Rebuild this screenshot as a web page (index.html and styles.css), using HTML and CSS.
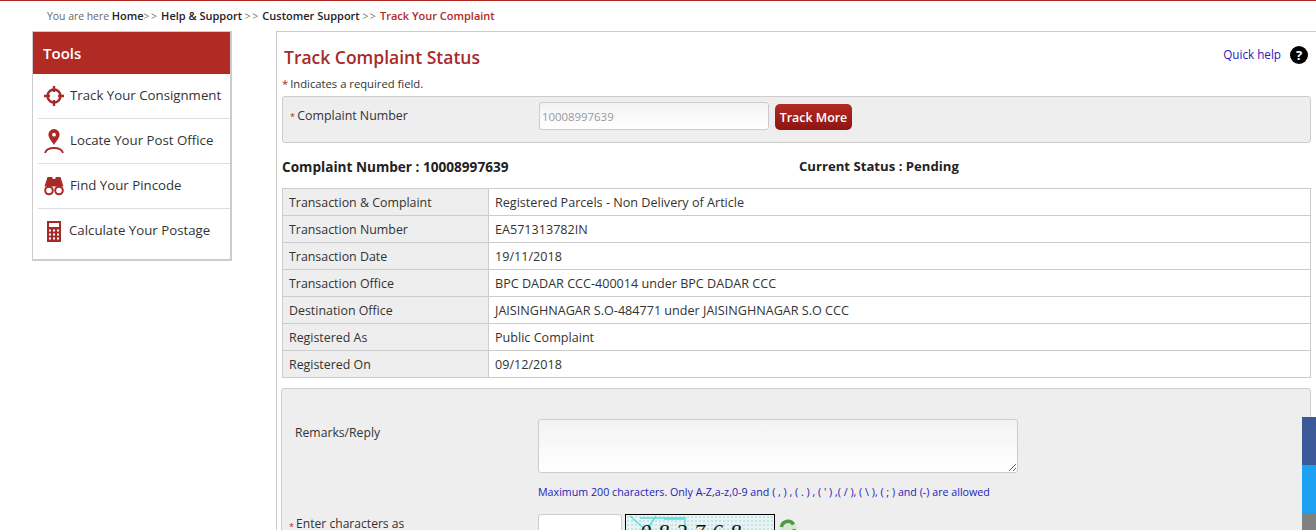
FILE: index.html
```html
<!DOCTYPE html>
<html lang="en">
  <head>
    <meta charset="UTF-8" />
    <title>Track Your Complaint</title>
    <link rel="stylesheet" href="styles.css">
  </head>
  <body>
    <div class="breadcrumb">
      You are here <b>Home</b><span class="sep">&gt;&gt;</span> <b>Help &amp; Support</b> <span class="sep">&gt;&gt;</span> <b>Customer Support</b> <span class="sep">&gt;&gt;</span> <b class="current">Track Your Complaint</b>
    </div>

    <div class="layout">
      <div class="tools">
        <div class="tools-title">Tools</div>
        <ul class="tools-list">
          <li>
            <svg class="tool-icon" viewBox="0 0 20 20" width="20" height="20">
              <circle cx="10" cy="10" r="6.5" fill="none" stroke="#a82a28" stroke-width="2.4" />
              <path d="M10 0v6M10 14v6M0 10h6M14 10h6" stroke="#a82a28" stroke-width="2.4" />
            </svg>
            <span class="tool-name">Track Your Consignment</span>
          </li>
          <li>
            <svg class="tool-icon" viewBox="0 0 20 25" width="20" height="25">
              <path fill-rule="evenodd" fill="#a82a28" d="M10 0a5.6 5.6 0 0 1 5.6 5.6c0 3.4-3.4 7-5.6 10.4C7.800 12.600 4.400 9 4.400 5.600A5.600 5.600 0 0 1 10 0zm0 3.800a1.900 1.900 0 1 0 0 3.800 1.900 1.900 0 0 0 0-3.800z" />
              <path d="M1 24c1-3.500 4.500-5 9-5s8 1.500 9 5" fill="none" stroke="#a82a28" stroke-width="1.800" />
            </svg>
            <span class="tool-name">Locate Your Post Office</span>
          </li>
          <li>
            <svg class="tool-icon" viewBox="0 0 20 20" width="20" height="20">
              <path fill="#a82a28" d="M3.500 1h4.500l1 2h2l1-2h4.500l3 9.500H0.500z" />
              <circle cx="5" cy="14.500" r="3.800" fill="#fff" stroke="#a82a28" stroke-width="2" />
              <circle cx="15" cy="14.500" r="3.800" fill="#fff" stroke="#a82a28" stroke-width="2" />
            </svg>
            <span class="tool-name">Find Your Pincode</span>
          </li>
          <li class="calc">
            <svg class="tool-icon" viewBox="0 0 14 21" width="14" height="21">
              <path fill-rule="evenodd" fill="#a82a28" d="M0 0h14v21H0zM2 2v4h10V2zM2 8.500v2h2v-2zm4 0v2h2v-2zm4 0v2h2v-2zM2 12.500v2h2v-2zm4 0v2h2v-2zm4 0v2h2v-2zM2 16.500v2h2v-2zm4 0v2h2v-2zm4 0v2h2v-2z" />
            </svg>
            <span class="tool-name">Calculate Your Postage</span>
          </li>
        </ul>
      </div>

      <div class="main">
        <div class="main-head">
          <h1>Track Complaint Status</h1>
          <div class="quick-help">
            <a>Quick help</a>
            <span class="help-icon">?</span>
          </div>
        </div>
        <p class="required-note"><span class="star">*</span> Indicates a required field.</p>

        <div class="panel search-panel">
          <label class="field-label"><span class="star">*</span> Complaint Number</label>
          <input class="text-input" type="text" value="10008997639" readonly />
          <button class="track-btn">Track More</button>
        </div>

        <div class="summary">
          <div class="summary-number">Complaint Number : 10008997639</div>
          <div class="summary-status">Current Status : Pending</div>
        </div>

        <table class="details">
          <tr><td>Transaction &amp; Complaint</td><td>Registered Parcels - Non Delivery of Article</td></tr>
          <tr><td>Transaction Number</td><td>EA571313782IN</td></tr>
          <tr><td>Transaction Date</td><td>19/11/2018</td></tr>
          <tr><td>Transaction Office</td><td>BPC DADAR CCC-400014 under BPC DADAR CCC</td></tr>
          <tr><td>Destination Office</td><td>JAISINGHNAGAR S.O-484771 under JAISINGHNAGAR S.O CCC</td></tr>
          <tr><td>Registered As</td><td>Public Complaint</td></tr>
          <tr><td>Registered On</td><td>09/12/2018</td></tr>
        </table>

        <div class="panel reply-panel">
          <div class="reply-row">
            <label class="field-label reply-label">Remarks/Reply</label>
            <div>
              <textarea class="remarks"></textarea>
              <p class="hint">Maximum 200 characters. Only A-Z,a-z,0-9 and ( , ) , ( . ) , ( ' ) ,( / ), ( \ ), ( ; ) and (-) are allowed</p>
            </div>
          </div>
          <div class="captcha-row">
            <label class="field-label captcha-label"><span class="star">*</span> Enter characters as</label>
            <input class="captcha-input" type="text" />
            <div class="captcha-img">
              <svg class="captcha-noise" viewBox="0 0 150 24" width="150" height="24">
                <path d="M4 1l18 16M14 3h45v14M30 1l-8 12M38 4h20" fill="none" stroke="#5fdcdc" stroke-width="1.500" />
              </svg>
              <span class="captcha-text">082768</span>
            </div>
            <svg class="refresh" viewBox="0 0 18 18" width="18" height="18">
              <circle cx="9" cy="9" r="8.500" fill="#d5e8d0" />
              <path d="M2.500 8a6.500 6.500 0 0 1 12-2.500M15.500 10a6.500 6.500 0 0 1-12 2.500" fill="none" stroke="#4f9a45" stroke-width="3.500" />
            </svg>
          </div>
        </div>
      </div>
    </div>

    <div class="social">
      <div class="social-fb"></div>
      <div class="social-tw"></div>
      <div class="social-more"></div>
    </div>
  </body>
</html>
```

FILE: styles.css
```css
html,
body {
  height: 530px;
  overflow: hidden;
}

body {
  margin: 0;
  font-family: "Open Sans", "Noto Sans", sans-serif;
  font-size: 12px;
  color: #333;
  background-color: #fff;
  border-top: 1px solid #b02a25;
  box-sizing: border-box;
}

.breadcrumb {
  height: 30px;
  padding: 8px 0 0 47px;
  box-sizing: border-box;
  font-size: 10.4px;
  line-height: 14px;
  color: #666;
  white-space: nowrap;
}

.breadcrumb b {
  color: #222;
  font-size: 11px;
  font-weight: 600;
}

.breadcrumb .current {
  color: #b02a25;
}

.sep {
  color: #777;
  letter-spacing: 1.5px;
}

.layout {
  display: flex;
  align-items: flex-start;
  padding-left: 32px;
}

.tools {
  width: 200px;
  height: 230px;
  box-sizing: border-box;
  flex-shrink: 0;
  border: 1px solid #ccc;
  border-width: 1px 2px 2px 1px;
}

.tools-title {
  height: 42px;
  padding-left: 10px;
  background-color: #b22a24;
  color: #fff;
  font-size: 15px;
  font-weight: 600;
  line-height: 42px;
}

.tools-list {
  list-style: none;
  margin: 0;
  padding: 0 0 0 5px;
}

.tools-list li {
  display: flex;
  align-items: center;
  gap: 6px;
  height: 45px;
  padding-left: 6px;
  box-sizing: border-box;
  border-bottom: 1px solid #ddd;
  font-size: 13.25px;
  white-space: nowrap;
}

.tool-name {
  margin-top: -2px;
}

.tools-list li.calc {
  border-bottom: none;
  gap: 8px;
  padding-left: 9px;
}

.tools-list li.calc .tool-name {
  margin-top: -4px;
}

.tool-icon {
  flex-shrink: 0;
}

.main {
  width: 1040px;
  height: 600px;
  flex-shrink: 0;
  margin-left: 44px;
  padding: 0 0 0 5px;
  box-sizing: border-box;
  border-top: 1px solid #ccc;
  border-left: 1px solid #ccc;
}

.main-head {
  display: flex;
  justify-content: space-between;
  height: 44px;
}

h1 {
  margin: 13px 0 0 2px;
  font-size: 17.500px;
  font-weight: 600;
  line-height: 24px;
  color: #a82a28;
}

.quick-help {
  display: flex;
  align-items: center;
  gap: 9px;
  height: 18px;
  margin: 14px 0 0 0;
  padding-right: 8px;
}

.quick-help a {
  color: #2222bb;
  font-size: 11.7px;
  margin-top: -2px;
}

.help-icon {
  width: 18px;
  height: 18px;
  border-radius: 50%;
  background-color: #000;
  color: #fff;
  font-size: 13px;
  font-weight: 700;
  line-height: 18px;
  text-align: center;
}

.required-note {
  margin: 0 0 4px;
  font-size: 11.25px;
  line-height: 16px;
}

.star {
  color: #b02a25;
  margin-right: -1px;
}

.panel {
  box-sizing: border-box;
  width: 1029px;
  border: 1px solid #ccc;
  border-radius: 3px;
  background-color: #eee;
}

.search-panel {
  display: flex;
  align-items: flex-start;
  height: 47px;
  padding: 5px 0 0 7px;
}

.field-label {
  width: 249px;
  flex-shrink: 0;
  line-height: 27px;
  font-size: 12.4px;
}

.field-label .star {
  font-size: 9px;
  margin-right: -1px;
}

.text-input {
  width: 230px;
  height: 28px;
  box-sizing: border-box;
  margin-right: 6px;
  padding: 0 2px;
  border: 1px solid #ccc;
  border-radius: 3px;
  background: linear-gradient(#f3f3f3, #fff);
  color: #999;
  font-family: inherit;
  font-size: 11.4px;
  outline: none;
}

.track-btn {
  width: 77px;
  height: 26px;
  margin-top: 2px;
  padding: 0;
  border: none;
  border-radius: 5px;
  background: linear-gradient(#b22a24, #8e1512);
  color: #fff;
  font-family: inherit;
  font-size: 12.4px;
  font-weight: 600;
}

.summary {
  display: flex;
  height: 45px;
  padding-top: 14px;
  box-sizing: border-box;
  font-weight: 700;
  line-height: 19px;
  color: #222;
}

.summary-number {
  width: 517px;
  font-size: 13.6px;
}

.summary-status {
  font-size: 13.15px;
}

.details {
  width: 1029px;
  border-collapse: collapse;
  table-layout: fixed;
}

.details td {
  height: 27px;
  padding: 0 6px;
  box-sizing: border-box;
  border: 1px solid #ccc;
  font-size: 12.6px;
  white-space: nowrap;
}

.details td:first-child {
  width: 206px;
  background-color: #eee;
  font-size: 12.4px;
}

.reply-panel {
  width: 1030px;
  height: 170px;
  margin: 10px 0 0 -1px;
  overflow: hidden;
}

.reply-row {
  display: flex;
  padding: 30px 0 0 13px;
}

.reply-label {
  width: 243px;
  line-height: 27px;
  font-size: 12.2px;
}

.remarks {
  display: block;
  width: 480px;
  height: 54px;
  box-sizing: border-box;
  border: 1px solid #ccc;
  border-radius: 3px;
  background: linear-gradient(#f3f3f3, #fff);
  outline: none;
}

.hint {
  margin: 12px 0 0;
  font-size: 10.7px;
  line-height: 14px;
  color: #2222bb;
  white-space: nowrap;
}

.captcha-row {
  display: flex;
  align-items: flex-start;
  margin-top: 15px;
  padding-left: 7px;
}

.captcha-label {
  width: 249px;
  line-height: 20px;
  font-size: 12.1px;
}

.captcha-label .star {
  vertical-align: -2px;
}

.captcha-input {
  width: 84px;
  height: 30px;
  box-sizing: border-box;
  border: 1px solid #ccc;
  border-radius: 3px;
  background-color: #fff;
  outline: none;
}

.captcha-img {
  position: relative;
  width: 150px;
  height: 30px;
  margin-left: 3px;
  box-sizing: border-box;
  border: 1px solid #000;
  background-color: #e6f4f4;
  background-image: radial-gradient(#c4e2e6 0.7px, transparent 0.8px);
  background-size: 4px 4px;
  overflow: hidden;
}

.captcha-noise {
  position: absolute;
  left: 0;
  top: 0;
}

.captcha-text {
  position: relative;
  display: block;
  margin-left: 14px;
  font-family: "Liberation Serif", serif;
  font-size: 22px;
  font-style: italic;
  letter-spacing: 7px;
  line-height: 34px;
  color: #111;
}

.refresh {
  margin: 5px 0 0 4px;
}

.social {
  position: fixed;
  right: 0;
  top: 417px;
  width: 14px;
}

.social-fb {
  height: 48px;
  background-color: #3b5998;
}

.social-tw {
  height: 48px;
  background-color: #1da1f2;
}

.social-more {
  height: 48px;
  background-color: #808080;
}
```
